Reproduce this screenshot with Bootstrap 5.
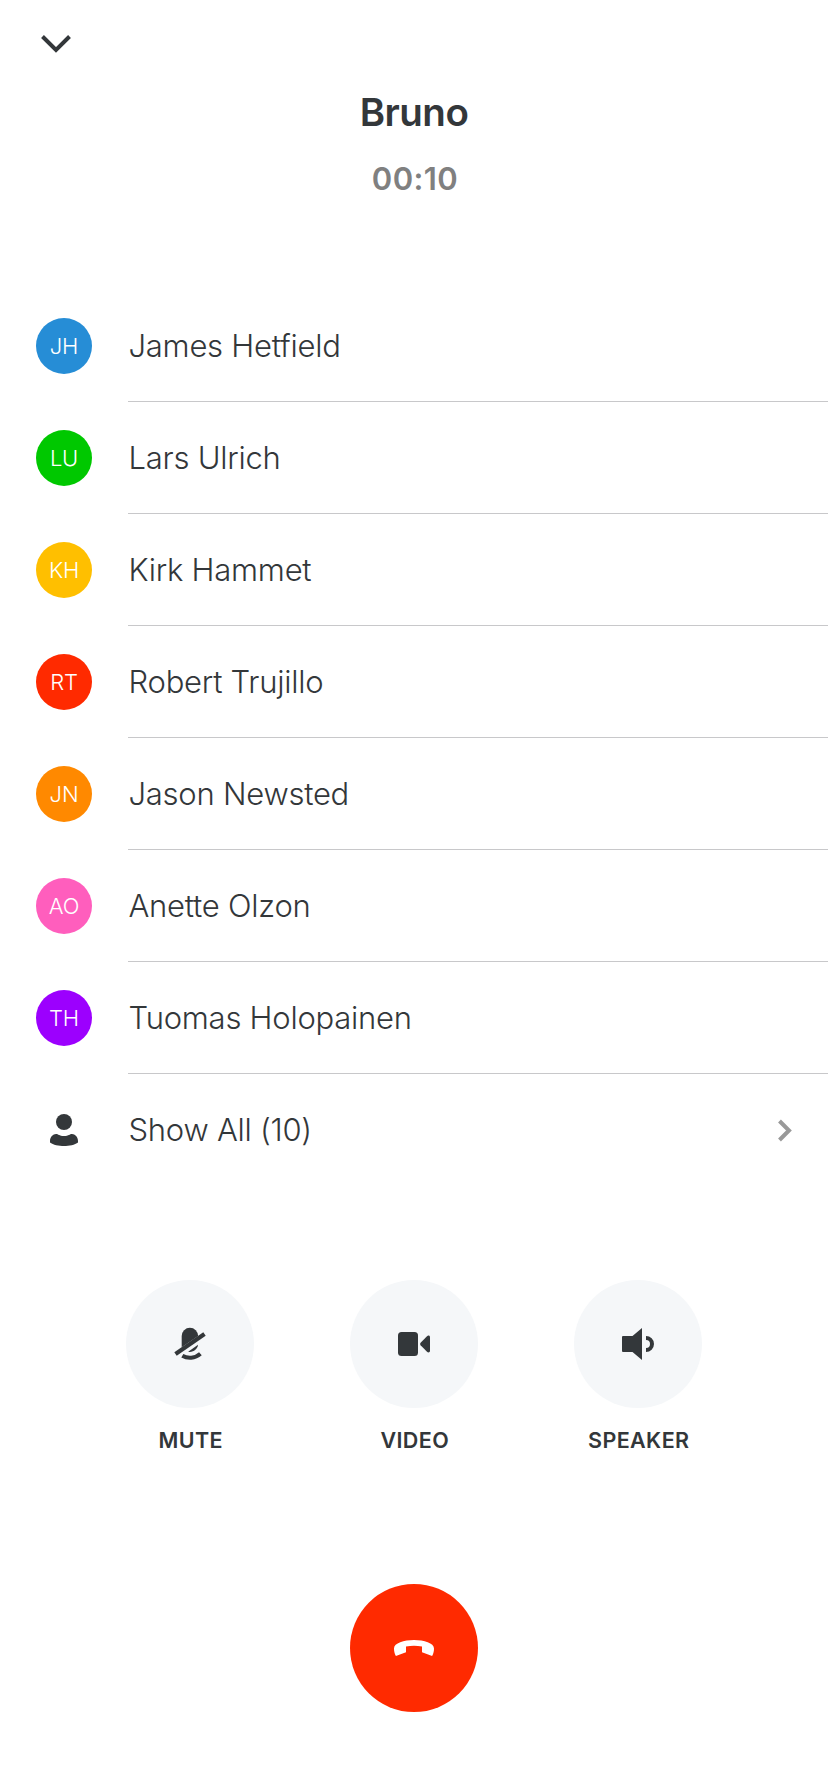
<!DOCTYPE html>
<html lang="en">
<head>
<meta charset="utf-8">
<meta name="viewport" content="width=device-width, initial-scale=1">
<title>Call</title>
<link href="https://cdn.jsdelivr.net/npm/bootstrap@5.3.0/dist/css/bootstrap.min.css" rel="stylesheet">
<style>
  body { font-family: Inter, "Liberation Sans", sans-serif; color: #33373a; background: #fff; }
  svg { display: block; flex: none; }
  .topbar { height: 88px; padding: 26px 38px 0; }
  .call-name { font-size: 38.5px; line-height: 48px; font-weight: 600; letter-spacing: -.5px; }
  .call-time { font-size: 31px; line-height: 40px; font-weight: 600; color: #808080; margin-top: 23px; letter-spacing: .4px; padding-left: 2px; }
  .people { margin-top: 91px; }
  .person { height: 112px; padding-left: 36px; }
  .initials { width: 56px; height: 56px; font-size: 22px; font-weight: 300; color: #fff; flex: none; letter-spacing: -.2px; }
  .person-name { height: 112px; margin-left: 36px; padding-top: 2px; font-size: 31px; font-weight: 300; letter-spacing: -.25px; font-variant-ligatures: none; font-feature-settings: "calt" 0; border-bottom: 1px solid #c8c8ca; }
  .person-name span { padding-left: .5px; }
  .person:last-child .person-name { border-bottom-color: transparent; }
  .controls { gap: 96px; margin-top: 94px; }
  .control { width: 128px; }
  .round { width: 128px; height: 128px; background: #f5f7f9; color: inherit; }
  .control-label { font-size: 21.5px; line-height: 28px; font-weight: 600; margin-top: 18px; letter-spacing: .4px; padding-left: 1.5px; }
  .hangup { background: #ff2a00; color: #fff; margin-top: 130px; }
</style>
</head>
<body>
<main>
  <header>
    <div class="topbar">
      <svg width="36" height="36" viewBox="0 0 36 36" fill="none" stroke="currentColor" stroke-width="4"><path d="M4.500 10.500 18 24 31.500 10.500"/></svg>
    </div>
    <h1 class="call-name text-center mb-0">Bruno</h1>
    <div class="call-time text-center">00:10</div>
  </header>

  <section class="people">
    <div class="person d-flex align-items-center"><div class="initials rounded-circle d-flex align-items-center justify-content-center" style="background:#268dd6">JH</div><div class="person-name flex-grow-1 d-flex align-items-center"><span>James Hetfield</span></div></div>
    <div class="person d-flex align-items-center"><div class="initials rounded-circle d-flex align-items-center justify-content-center" style="background:#00c800">LU</div><div class="person-name flex-grow-1 d-flex align-items-center"><span>Lars Ulrich</span></div></div>
    <div class="person d-flex align-items-center"><div class="initials rounded-circle d-flex align-items-center justify-content-center" style="background:#ffbf00">KH</div><div class="person-name flex-grow-1 d-flex align-items-center"><span>Kirk Hammet</span></div></div>
    <div class="person d-flex align-items-center"><div class="initials rounded-circle d-flex align-items-center justify-content-center" style="background:#ff2a00">RT</div><div class="person-name flex-grow-1 d-flex align-items-center"><span>Robert Trujillo</span></div></div>
    <div class="person d-flex align-items-center"><div class="initials rounded-circle d-flex align-items-center justify-content-center" style="background:#ff8900">JN</div><div class="person-name flex-grow-1 d-flex align-items-center"><span>Jason Newsted</span></div></div>
    <div class="person d-flex align-items-center"><div class="initials rounded-circle d-flex align-items-center justify-content-center" style="background:#ff5ebd">AO</div><div class="person-name flex-grow-1 d-flex align-items-center"><span>Anette Olzon</span></div></div>
    <div class="person d-flex align-items-center"><div class="initials rounded-circle d-flex align-items-center justify-content-center" style="background:#9c00fe">TH</div><div class="person-name flex-grow-1 d-flex align-items-center"><span>Tuomas Holopainen</span></div></div>
    <div class="person d-flex align-items-center">
      <div class="initials d-flex align-items-center justify-content-center">
        <svg width="32" height="32" viewBox="0 0 32 32" fill="#33373a"><circle cx="16" cy="8" r="8"/><path d="M2 27C2 23 5 20 8 20c2.500 0 3 2 8 2s5.500-2 8-2c3 0 6 3 6 7v1.500C27 31 21 32 16 32S5 31 2 28.500Z"/></svg>
      </div>
      <div class="person-name flex-grow-1 d-flex align-items-center justify-content-between">
        <span>Show All (10)</span>
        <svg class="me-4" width="36" height="36" viewBox="0 0 36 36" fill="none" stroke="#999" stroke-width="4"><path d="M11.500 8 21 17.500 11.500 27"/></svg>
      </div>
    </div>
  </section>

  <section class="controls d-flex justify-content-center">
    <div class="control text-center">
      <button class="round btn border-0 rounded-circle p-0 d-flex align-items-center justify-content-center" aria-label="Mute">
        <svg width="36" height="36" viewBox="46 46 36 36" fill="currentColor"><path d="M55.700 66.400V56a8.200 8.200 0 0 1 16.400 0L55.700 67.300Z"/><path d="M48.300 72.300 77.300 52.200 79.700 55.700 50.700 75.800Z"/><path d="M62.200 71.700 72 64.700C71.500 69 67 72.800 62.200 71.700Z"/><path d="M56.300 75.700C61.500 78.800 69 78.700 74.400 73.800" fill="none" stroke="currentColor" stroke-width="4"/></svg>
      </button>
      <div class="control-label">MUTE</div>
    </div>
    <div class="control text-center">
      <button class="round btn border-0 rounded-circle p-0 d-flex align-items-center justify-content-center" aria-label="Video">
        <svg width="36" height="36" viewBox="46 46 36 36" fill="currentColor"><rect x="48" y="52" width="20" height="24" rx="3.500"/><path d="M70.600 62.700 77 56.200C78.300 55 80 55.700 80 57.200V70.800C80 72.300 78.300 73 77 71.800L70.600 65.300Q69.400 64 70.600 62.700Z"/></svg>
      </button>
      <div class="control-label">VIDEO</div>
    </div>
    <div class="control text-center">
      <button class="round btn border-0 rounded-circle p-0 d-flex align-items-center justify-content-center" aria-label="Speaker">
        <svg width="36" height="36" viewBox="46 46 36 36" fill="currentColor"><path d="M49 56H58.500L68 48V80L58.500 72H49Q48 72 48 71V57Q48 56 49 56Z"/><path d="M72 58a6 6 0 0 1 0 12" fill="none" stroke="currentColor" stroke-width="4"/></svg>
      </button>
      <div class="control-label">SPEAKER</div>
    </div>
  </section>

  <button class="round hangup btn border-0 rounded-circle p-0 mx-auto d-flex align-items-center justify-content-center" aria-label="End call">
    <svg width="48" height="48" viewBox="40 40 48 48" fill="currentColor"><path d="M45.900 72C44.500 69.500 44 67 44 64.500C44 59 54 56 64 56S84 59 84 64.500C84 67 83.500 69.500 82.100 72L72 68.200V62.600Q64 61 56 62.600V68.200Z"/></svg>
  </button>
</main>
<script src="https://cdn.jsdelivr.net/npm/bootstrap@5.3.0/dist/js/bootstrap.bundle.min.js"></script>
</body>
</html>
